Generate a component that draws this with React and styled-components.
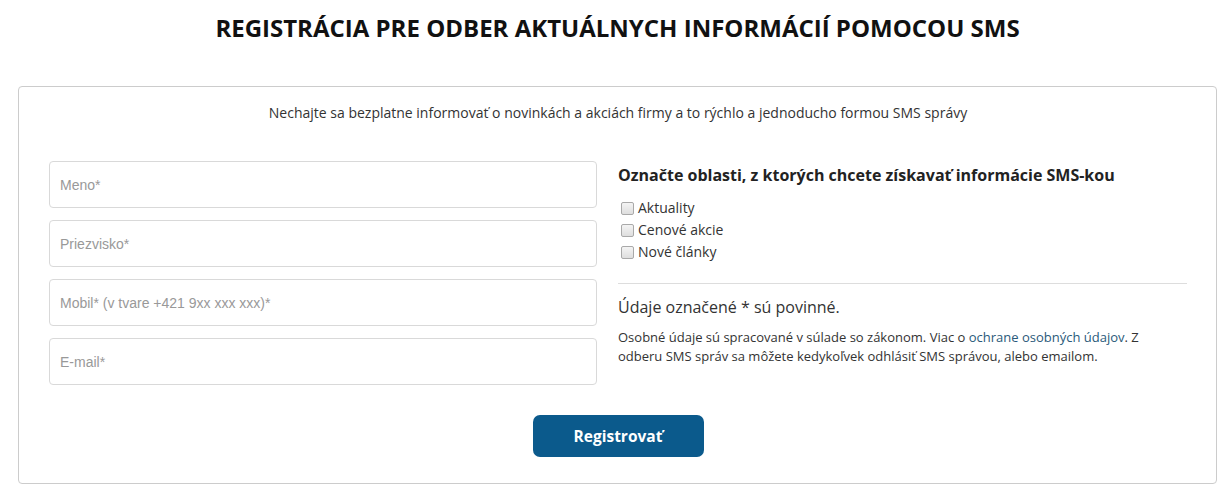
import React from "react";
import styled, { createGlobalStyle } from "styled-components";

const GlobalStyle = createGlobalStyle`
  body {
    margin: 0;
    background: #fff;
    font-family: "Open Sans", "Liberation Sans", sans-serif;
    color: #333;
  }
`;

const Page = styled.div`
  padding: 14px 8px 12px 18px;
`;

const Title = styled.h1`
  margin: 0 0 44px;
  text-align: center;
  font-size: 24px;
  line-height: 28px;
  font-weight: 700;
  color: #111;
  text-transform: uppercase;
`;

const Card = styled.div`
  border: 1px solid #ccc;
  border-radius: 4px;
  padding: 15px 29px 26px 30px;
`;

const Intro = styled.p`
  margin: 0 0 37px;
  text-align: center;
  font-size: 14px;
  line-height: 22px;
  color: #333;
`;

const Columns = styled.div`
  display: grid;
  grid-template-columns: 548px 1fr;
  column-gap: 21px;
`;

const Fields = styled.div`
  display: flex;
  flex-direction: column;
  gap: 12px;
`;

const Input = styled.input`
  box-sizing: border-box;
  height: 47px;
  width: 100%;
  border: 1px solid #d9d9d9;
  border-radius: 4px;
  padding: 0 10px;
  font-family: "Liberation Sans", Arial, sans-serif;
  font-size: 14px;
  color: #333;
  &::placeholder {
    color: #999;
  }
`;

const Side = styled.div`
  padding-top: 3px;
`;

const SideTitle = styled.h3`
  margin: 0 0 11px;
  font-size: 16px;
  line-height: 22px;
  font-weight: 700;
  color: #222;
`;

const CheckRow = styled.label`
  display: flex;
  align-items: center;
  gap: 4px;
  padding-left: 3px;
  font-size: 14px;
  line-height: 22px;
  color: #333;
`;

const Box = styled.span`
  width: 11px;
  height: 11px;
  border: 1px solid #a9a9a9;
  border-radius: 2px;
  background: linear-gradient(#f4f4f4, #dedede);
`;

const Divider = styled.hr`
  margin: 20px 0 10px;
  border: 0;
  border-top: 1px solid #ddd;
`;

const Required = styled.p`
  margin: 0 0 8px;
  font-size: 16px;
  line-height: 26px;
  color: #333;
`;

const Note = styled.p`
  margin: 0;
  max-width: 530px;
  font-size: 13px;
  line-height: 19px;
  color: #333;
`;

const NoteLink = styled.a`
  color: #2a5a7a;
  text-decoration: none;
`;

const Actions = styled.div`
  display: flex;
  justify-content: center;
  margin-top: 30px;
`;

const Button = styled.button`
  width: 171px;
  height: 42px;
  border: 0;
  border-radius: 7px;
  background: #0b5a8c;
  color: #fff;
  font-family: "Open Sans", sans-serif;
  font-weight: 700;
  font-size: 15.5px;
`;

const fields = [
  "Meno*",
  "Priezvisko*",
  "Mobil* (v tvare +421 9xx xxx xxx)*",
  "E-mail*",
];

const areas = ["Aktuality", "Cenové akcie", "Nové články"];

export default function App() {
  return (
    <Page>
      <GlobalStyle />
      <Title>Registrácia pre odber aktuálnych informácií pomocou SMS</Title>
      <Card>
        <Intro>
          Nechajte sa bezplatne informovať o novinkách a akciách firmy a to
          rýchlo a jednoducho formou SMS správy
        </Intro>
        <Columns>
          <Fields>
            {fields.map((f) => (
              <Input key={f} placeholder={f} />
            ))}
          </Fields>
          <Side>
            <SideTitle>
              Označte oblasti, z ktorých chcete získavať informácie SMS-kou
            </SideTitle>
            {areas.map((a) => (
              <CheckRow key={a}>
                <Box />
                {a}
              </CheckRow>
            ))}
            <Divider />
            <Required>Údaje označené * sú povinné.</Required>
            <Note>
              Osobné údaje sú spracované v súlade so zákonom. Viac o{" "}
              <NoteLink href="#">ochrane osobných údajov</NoteLink>. Z odberu
              SMS správ sa môžete kedykoľvek odhlásiť SMS správou, alebo
              emailom.
            </Note>
          </Side>
        </Columns>
        <Actions>
          <Button>Registrovať</Button>
        </Actions>
      </Card>
    </Page>
  );
}
